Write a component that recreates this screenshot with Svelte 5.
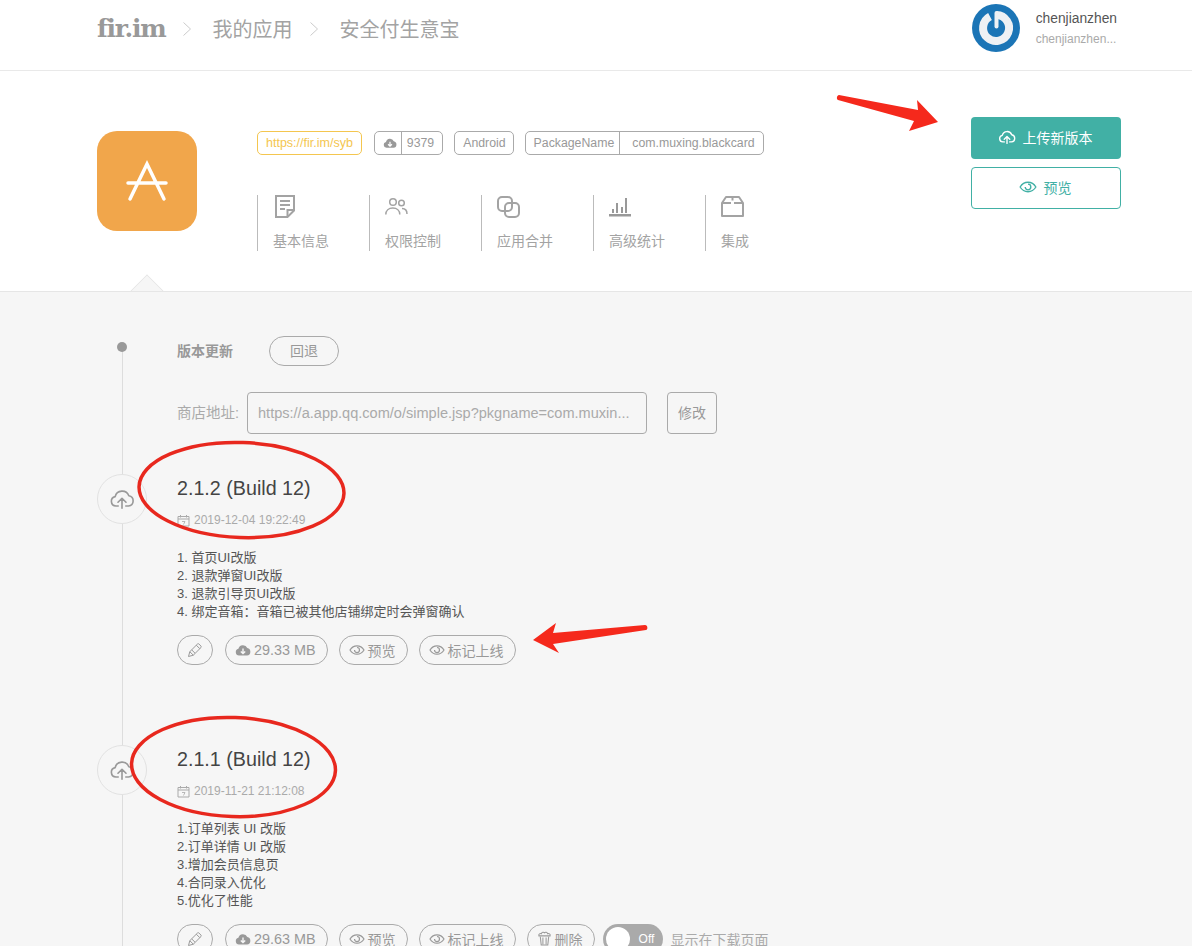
<script lang="ts">
  const tabs = ["基本信息", "权限控制", "应用合并", "高级统计", "集成"];

  const versions = [
    {
      title: "2.1.2 (Build 12)",
      date: "2019-12-04 19:22:49",
      notes: ["1. 首页UI改版", "2. 退款弹窗UI改版", "3. 退款引导页UI改版", "4. 绑定音箱：音箱已被其他店铺绑定时会弹窗确认"],
      size: "29.33 MB",
      extra: false,
    },
    {
      title: "2.1.1 (Build 12)",
      date: "2019-11-21 21:12:08",
      notes: ["1.订单列表 UI 改版", "2.订单详情 UI 改版", "3.增加会员信息页", "4.合同录入优化", "5.优化了性能"],
      size: "29.63 MB",
      extra: true,
    },
  ];
</script>

{#snippet cloudFill(size)}
  <svg width={size} height={size} viewBox="0 0 16 16"><path fill="currentColor" d="M4 13.5a3.4 3.4 0 0 1-.6-6.7A4.7 4.7 0 0 1 12.3 6 3.8 3.8 0 0 1 12 13.5Z" /><path fill="none" stroke="#f6f6f6" stroke-width="1.4" d="M8 6.5v5M5.8 9.4 8 11.6l2.2-2.2" /></svg>
{/snippet}

{#snippet cloudUp(size, sw)}
  <svg width={size} height={size} viewBox="0 0 24 24" fill="none" stroke="currentColor" stroke-width={sw} stroke-linecap="round" stroke-linejoin="round"><path d="M8.5 18.5H6.4a4.4 4.4 0 0 1-.7-8.7A6.6 6.6 0 0 1 18.3 9a4.8 4.8 0 0 1-.3 9.5h-2.5" /><path d="M12 20.500v-9M8.300 15 12 11.300l3.700 3.700" /></svg>
{/snippet}

{#snippet eye(size)}
  <svg width={size} height={size} viewBox="0 0 16 16" fill="none" stroke="currentColor" stroke-width="1.200"><path d="M1 8c1.700-2.800 4-4.200 7-4.200s5.300 1.400 7 4.200c-1.700 2.800-4 4.200-7 4.200S2.700 10.800 1 8Z" /><path d="M8 5.500a2.500 2.500 0 1 1-2.500 2.500" /></svg>
{/snippet}

{#snippet pencil()}
  <svg width="16" height="16" viewBox="0 0 16 16" fill="none" stroke="currentColor" stroke-width="1"><path d="M1.500 14.500 2.800 9.700 10.500 2a1 1 0 0 1 1.400 0l2.100 2.100a1 1 0 0 1 0 1.400L6.300 13.200Z" /><path d="M2.800 9.700 6.300 13.200M4.800 8 8 11.200M9.300 3.200l3.500 3.500" /></svg>
{/snippet}

{#snippet calendar()}
  <svg width="13" height="13" viewBox="0 0 13 13" fill="none" stroke="currentColor"><path d="M1 2.500h11v9.500H1ZM1 5h11M3.500 1v2.500M9.500 1v2.500" /><path d="M5 7.500h3L6.500 10.500" stroke-width=".8" /></svg>
{/snippet}

{#snippet trash()}
  <svg width="15" height="15" viewBox="0 0 16 16" fill="none" stroke="currentColor" stroke-width="1.100"><path d="M2 5.200c-.6-2 1.500-3 2.600-2.300C5.400 1.300 7 1 8 1.900c1-.9 2.600-.6 3.400 1 1.100-.7 3.200.3 2.600 2.300Z" /><path d="M3.500 6 4.500 15h7l1-9M6.300 7v7M9.700 7v7" /></svg>
{/snippet}

{#snippet chevron()}
  <svg class="chev" width="10" height="16" viewBox="0 0 10 16" fill="none" stroke="#ccc"><path d="m1.500 1.500 7 6.500-7 6.500" /></svg>
{/snippet}

<div class="page">
  <header class="topbar">
    <nav class="crumbs">
      <span class="logo">fir.im</span>
      {@render chevron()}
      <span>我的应用</span>
      {@render chevron()}
      <span>安全付生意宝</span>
    </nav>
    <div class="user">
      <svg width="48" height="48" viewBox="0 0 48 48" fill="none">
        <circle cx="24" cy="24" r="24" fill="#1b75b6" />
        <path d="M24.500 11A13 13 0 1 1 18 12.500" stroke="#eef1f4" stroke-width="8" />
        <path d="M24.500 9v13.500" stroke="#eef1f4" stroke-width="4" stroke-linecap="round" />
      </svg>
      <div class="user-text">
        <div class="user-name">chenjianzhen</div>
        <div class="user-mail">chenjianzhen...</div>
      </div>
    </div>
  </header>

  <section class="hero">
    <div class="app-icon">
      <svg width="100" height="100" viewBox="0 0 100 100" fill="none" stroke="#fff" stroke-width="3.500" stroke-linecap="round"><path d="M33 68 50 33l17 35M31 52h38" /></svg>
    </div>
    <div class="hero-main">
      <div class="tags">
        <a class="tag tag-link">https://fir.im/syb</a>
        <div class="tag tag-split">
          <span class="cell icon-cell"><svg width="14" height="14" viewBox="0 0 16 16"><path fill="#999" d="M4 13.500a3.400 3.400 0 0 1-.6-6.700A4.700 4.700 0 0 1 12.300 6 3.800 3.800 0 0 1 12 13.500Z" /><path fill="none" stroke="#fff" stroke-width="1.400" d="M8 6.500v5M5.800 9.400 8 11.600l2.200-2.200" /></svg></span>
          <span class="cell count">9379</span>
        </div>
        <div class="tag tag-os">Android</div>
        <div class="tag tag-split">
          <span class="cell pkg-key">PackageName</span>
          <span class="cell pkg-value">com.muxing.blackcard</span>
        </div>
      </div>
      <ul class="tabs">
        {#each tabs as tab, i}
          <li class="tab">
            <span class="tab-icon">
              {#if i === 0}
                <svg width="24" height="24" viewBox="0 0 24 24" fill="none" stroke="#a3a3a3" stroke-width="2"><path d="M3 1h18v14.500L14.500 22H3Z" /><path d="M7 6h10M7 10h10M7 14h5M21 15h-6.500v7" /></svg>
              {:else if i === 1}
                <svg width="24" height="24" viewBox="0 0 24 24" fill="none" stroke="#a3a3a3" stroke-width="1.500"><circle cx="8" cy="7" r="3.300" /><circle cx="16.500" cy="8" r="2.800" /><path d="M.8 19.500c0-4 3-6.500 7-6.500s7 2.500 7 6.500M17 13.500c3 0 5 2 5 5.500" /></svg>
              {:else if i === 2}
                <svg width="24" height="24" viewBox="0 0 24 24" fill="none" stroke="#a3a3a3" stroke-width="2"><rect x="1" y="2" width="14" height="14" rx="4" /><rect x="8" y="8" width="14" height="14" rx="4" /></svg>
              {:else if i === 3}
                <svg width="24" height="24" viewBox="0 0 24 24" fill="#999"><path d="M0 19h22v2.500H0ZM3 14h2v4H3ZM7 8h2v10H7ZM12 12h2v6h-2ZM16 3h2v15h-2Z" /></svg>
              {:else}
                <svg width="24" height="24" viewBox="0 0 24 24" fill="none" stroke="#a3a3a3" stroke-width="2" stroke-linejoin="round"><path d="M1 8 5 2h13l4 6v13H1Z" /><path d="M1 8h9M13 8h9M11.500 2v3.500" /></svg>
              {/if}
            </span>
            <span class="tab-label">{tab}</span>
          </li>
        {/each}
      </ul>
    </div>
    <div class="hero-actions">
      <button class="btn-primary">{@render cloudUp(18, 1.8)}<span>上传新版本</span></button>
      <button class="btn-outline">{@render eye(18)}<span>预览</span></button>
    </div>
    <div class="notch"></div>
  </section>

  <main class="timeline">
    <div class="dot"></div>
    <div class="row row-head">
      <span class="head-label">版本更新</span>
      <button class="pill rollback">回退</button>
    </div>
    <div class="row row-store">
      <span class="store-label">商店地址:</span>
      <div class="store-input">https://a.app.qq.com/o/simple.jsp?pkgname=com.muxin...</div>
      <button class="store-btn">修改</button>
    </div>

    {#each versions as v}
      <article class="version">
        <div class="node">{@render cloudUp(26, 1.5)}</div>
        <h2>{v.title}</h2>
        <div class="date">{@render calendar()}<span>{v.date}</span></div>
        <div class="notes">
          {#each v.notes as note}
            <div>{note}</div>
          {/each}
        </div>
        <div class="actions">
          <button class="pill round">{@render pencil()}</button>
          <button class="pill">{@render cloudFill(16)}<span class="size">{v.size}</span></button>
          <button class="pill">{@render eye(16)}<span>预览</span></button>
          <button class="pill">{@render eye(16)}<span>标记上线</span></button>
          {#if v.extra}
            <button class="pill">{@render trash()}<span>删除</span></button>
            <div class="toggle"><span class="knob"></span><span>Off</span></div>
            <span class="toggle-label">显示在下载页面</span>
          {/if}
        </div>
      </article>
    {/each}
  </main>

  <svg class="marks" width="1192" height="946" viewBox="0 0 1192 946">
    <g fill="none" stroke="#e8281e" stroke-width="3.500">
      <ellipse cx="241.500" cy="490" rx="102.500" ry="47.500" transform="rotate(2 241 490)" />
      <ellipse cx="233.500" cy="767" rx="102" ry="49.500" transform="rotate(2 233 767)" />
    </g>
    <g fill="#f5291c">
      <path d="M839 95c-2 0-3 4-1 5l76 21-5 10 29-9-21-22 1 10Z" />
      <path d="M533 640 556 623 553 633 645 625c3 0 3 5 1 5L553 644 559 653Z" />
    </g>
  </svg>
</div>

<style>
  :global(body) {
    margin: 0;
    background: #fff;
  }

  .page {
    position: relative;
    width: 1192px;
    height: 946px;
    overflow: hidden;
    color: #999;
    font-family: "Liberation Sans", "Noto Sans CJK SC", sans-serif;
    font-size: 13px;
  }

  button {
    font: inherit;
    color: inherit;
    background: none;
    cursor: pointer;
  }

  /* Top bar */
  .topbar {
    display: flex;
    align-items: center;
    justify-content: space-between;
    height: 70px;
    box-sizing: content-box;
    padding: 0 75px 0 97px;
    border-bottom: 1px solid #e9e9e9;
    background: #fff;
  }

  .crumbs {
    display: flex;
    align-items: center;
    margin-bottom: 13px;
    font-size: 20px;
    color: #a3a3a3;
  }

  .logo {
    font-family: "DejaVu Serif", serif;
    font-weight: 700;
    font-size: 25px;
    letter-spacing: -1.200px;
    color: #999;
  }

  .chev {
    flex: none;
    margin: 0 21px 0 16px;
  }

  .user {
    display: flex;
    align-items: center;
    gap: 16px;
    margin-bottom: 14px;
  }

  .user-name {
    font-size: 13.800px;
    line-height: 18px;
    color: #555;
  }

  .user-mail {
    margin-top: 3px;
    font-size: 12px;
    line-height: 16px;
    color: #aaa;
  }

  /* App hero */
  .hero {
    position: relative;
    display: flex;
    height: 221px;
    box-sizing: border-box;
    padding: 46px 71px 0 97px;
    background: #fff;
    border-bottom: 1px solid #e6e6e6;
  }

  .app-icon {
    flex: none;
    width: 100px;
    height: 100px;
    margin-top: 14px;
    margin-right: 60px;
    border-radius: 20px;
    background: #f1a64b;
  }

  .app-icon svg {
    display: block;
  }

  .hero-main {
    flex: 1;
    padding-top: 14px;
  }

  .tags {
    display: flex;
    gap: 11px;
  }

  .tag {
    display: flex;
    align-items: center;
    box-sizing: border-box;
    height: 24px;
    padding: 0 8px;
    border: 1px solid #aaa;
    border-radius: 5px;
    font-size: 12.300px;
    color: #999;
  }

  .tag-link {
    margin-right: 1px;
    border-color: #f4c64f;
    font-size: 12.500px;
    color: #f4c64f;
  }

  .tag-os {
    padding: 0 7px 0 8px;
  }

  .tag-split {
    padding: 0;
  }

  .cell {
    display: flex;
    align-items: center;
    height: 100%;
  }

  .cell + .cell {
    border-left: 1px solid #aaa;
  }

  .icon-cell {
    padding: 0 4px 0 8px;
  }

  .count {
    padding: 0 8px 0 5px;
  }

  .pkg-key {
    padding: 0 5px 0 8px;
  }

  .pkg-value {
    padding: 0 8px 0 12px;
  }

  .tabs {
    display: flex;
    margin: 40px 0 0;
    padding: 0;
    list-style: none;
  }

  .tab {
    display: flex;
    flex-direction: column;
    box-sizing: border-box;
    width: 112px;
    height: 56px;
    padding-left: 15px;
    border-left: 1px solid #bbb;
  }

  .tab-icon {
    display: block;
    height: 24px;
  }

  .tab-label {
    margin-top: 13px;
    font-size: 14px;
    line-height: 19px;
    color: #a3a3a3;
  }

  .hero-actions {
    display: flex;
    flex-direction: column;
    gap: 8px;
    flex: none;
    width: 150px;
  }

  .hero-actions button {
    display: flex;
    align-items: center;
    justify-content: center;
    gap: 7px;
    box-sizing: border-box;
    height: 42px;
    padding: 0 2px 2px 0;
    border-radius: 4px;
    font-size: 14px;
  }

  .btn-primary {
    border: 0;
    background: #41b0a5;
    color: #fff;
  }

  .btn-outline {
    border: 1px solid #41b0a5;
    background: #fff;
    color: #41b0a5;
  }

  .notch {
    position: absolute;
    left: 135px;
    bottom: -12px;
    box-sizing: border-box;
    width: 24px;
    height: 24px;
    background: #f6f6f6;
    border-left: 1px solid #e6e6e6;
    border-top: 1px solid #e6e6e6;
    transform: rotate(45deg);
    clip-path: polygon(0 0, 100% 0, 0 100%);
  }

  /* Version timeline */
  .timeline {
    position: relative;
    height: 654px;
    box-sizing: border-box;
    padding: 44px 0 0 177px;
    background: #f6f6f6;
  }

  .timeline::before {
    content: "";
    position: absolute;
    left: 122px;
    top: 56px;
    bottom: 0;
    width: 1px;
    background: #ddd;
  }

  .dot {
    position: absolute;
    left: 117px;
    top: 50px;
    width: 10px;
    height: 10px;
    border-radius: 50%;
    background: #999;
  }

  .row {
    display: flex;
    align-items: center;
  }

  .row-head {
    gap: 36px;
    height: 30px;
  }

  .head-label {
    padding-bottom: 3px;
    font-size: 14px;
    font-weight: 700;
    color: #999;
  }

  .row-store {
    height: 42px;
    margin-top: 26px;
  }

  .store-label {
    width: 70px;
    padding-bottom: 3px;
    font-size: 14.500px;
    color: #aaa;
  }

  .store-input {
    box-sizing: border-box;
    width: 400px;
    height: 42px;
    padding: 0 10px;
    border: 1px solid #aaa;
    border-radius: 4px;
    font-size: 14.550px;
    line-height: 40px;
    white-space: nowrap;
    color: #aaa;
  }

  .store-btn {
    width: 50px;
    height: 42px;
    margin-left: 20px;
    padding: 0 0 2px;
    border: 1px solid #aaa;
    border-radius: 4px;
    font-size: 14px;
    color: #999;
  }

  .version {
    position: relative;
    height: 271px;
  }

  .row-store + .version {
    margin-top: 40px;
  }

  .node {
    position: absolute;
    left: -80px;
    top: 0;
    display: flex;
    align-items: center;
    justify-content: center;
    box-sizing: border-box;
    width: 50px;
    height: 50px;
    border: 1px solid #e2e2e2;
    border-radius: 50%;
    background: #f6f6f6;
    color: #999;
  }

  h2 {
    margin: 0;
    padding-top: 1px;
    font-size: 19.700px;
    font-weight: 400;
    line-height: 26px;
    color: #444;
  }

  .date {
    display: flex;
    align-items: center;
    gap: 4px;
    margin-top: 11px;
    font-size: 12px;
    line-height: 16px;
    color: #aaa;
  }

  .notes {
    margin-top: 21px;
    font-size: 13px;
    line-height: 18px;
    color: #555;
  }

  .actions {
    display: flex;
    align-items: center;
    gap: 11px;
    margin-top: 14px;
  }

  .pill {
    display: flex;
    align-items: center;
    justify-content: center;
    gap: 3px;
    box-sizing: border-box;
    height: 30px;
    padding: 0 11px 1px 9px;
    border: 1px solid #aaa;
    border-radius: 15px;
    font-size: 14px;
    color: #999;
  }

  .size {
    font-size: 14.400px;
  }

  .pill.round {
    width: 36px;
    margin-right: 1px;
    padding: 0;
  }

  .rollback {
    width: 70px;
    padding: 0 0 2px;
  }

  .toggle {
    display: flex;
    align-items: center;
    gap: 9px;
    box-sizing: border-box;
    width: 60px;
    height: 30px;
    margin-left: -3px;
    padding-left: 3px;
    border-radius: 15px;
    background: #aaa;
    font-size: 12px;
    color: #fff;
  }

  .knob {
    width: 24px;
    height: 24px;
    border-radius: 50%;
    background: #fff;
  }

  .toggle-label {
    margin-left: -3px;
    font-size: 14px;
    color: #aaa;
  }

  .marks {
    position: absolute;
    left: 0;
    top: 0;
    pointer-events: none;
  }
</style>
